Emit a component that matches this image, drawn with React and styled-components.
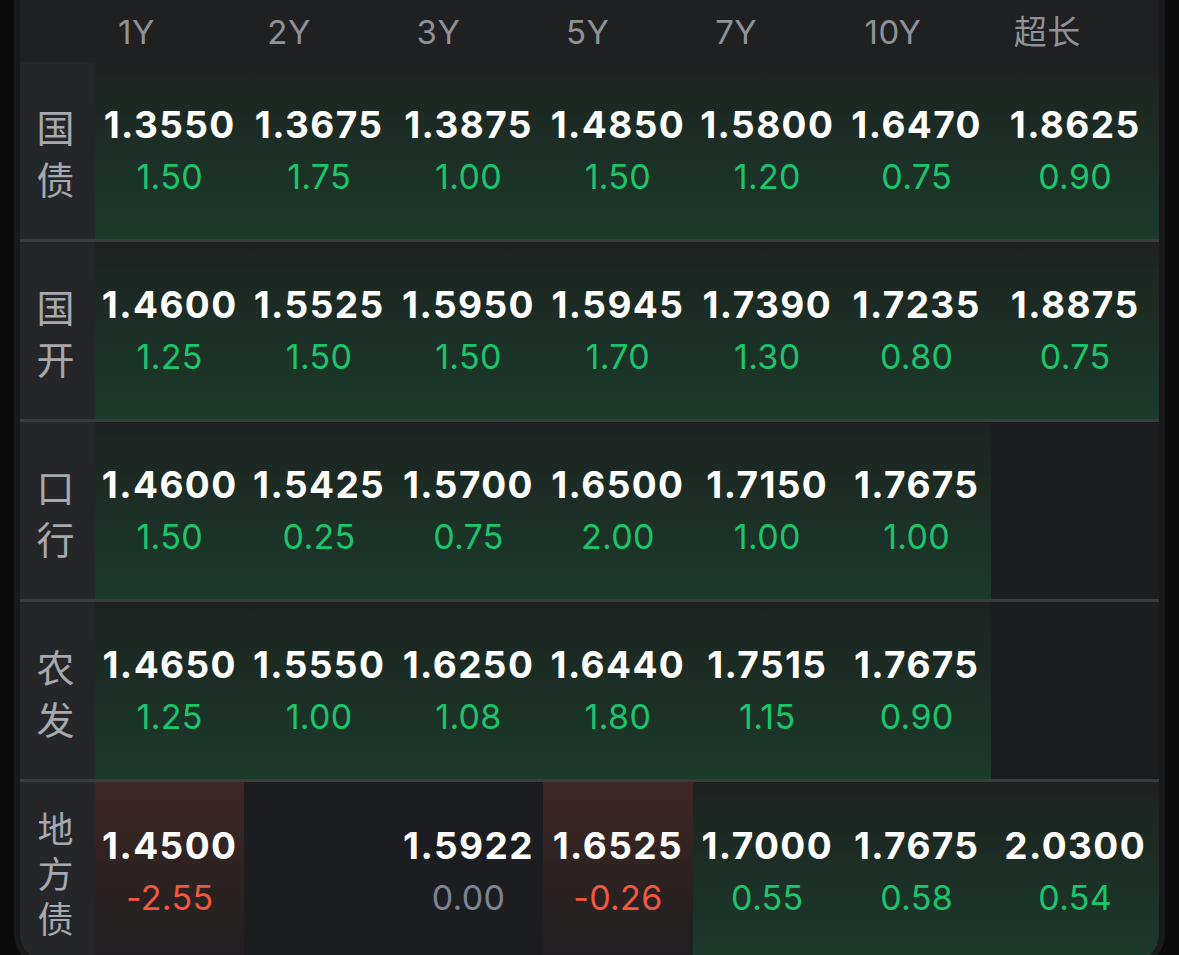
import React from 'react';
import styled, { createGlobalStyle, css } from 'styled-components';

const GlobalStyle = createGlobalStyle`
    html, body {
        margin: 0;
        padding: 0;
        background: #0b0b0c;
        height: 955px;
        overflow: hidden;
    }
    * {
        box-sizing: border-box;
    }
`

const Page = styled.div`
    width: 1179px;
    height: 955px;
    padding-left: 14px;
`

const Panel = styled.div`
    width: 1151px;
    border: 6px solid #19191b;
    border-top: none;
    border-radius: 0 0 34px 34px;
    background: #1c1d20;
    overflow: hidden;
`

const Header = styled.div`
    height: 62px;
    display: grid;
    grid-template-columns: repeat(7, 149.3px);
    align-items: center;
    padding-left: 98px;
    background: #1f2022;
`

const HeaderLabel = styled.span`
    font-family: Inter, "Noto Sans CJK SC", sans-serif;
    font-size: 33px;
    color: #8f9198;
    line-height: 1;
    padding-top: 2px;
    letter-spacing: 0.5px;
`

const Row = styled.div`
    display: grid;
    grid-template-columns: 75px repeat(6, 149.4px) 1fr;
    height: ${({ last }) => (last ? '180px' : '177px')};
    border-bottom: ${({ last }) => (last ? 'none' : '3px solid #3a3b3e')};
    box-sizing: content-box;
`

const RowLabel = styled.div`
    background: #25262a;
    display: flex;
    flex-direction: column;
    align-items: center;
    justify-content: center;
    padding-right: 4px;
    font-family: "Noto Sans CJK SC", sans-serif;
    font-size: ${({ tight }) => (tight ? '36px' : '38px')};
    color: #a7a9ae;
    line-height: ${({ tight }) => (tight ? '45px' : '52px')};
    padding-top: ${({ tight }) => (tight ? '0' : '2px')};
`

const toneBg = {
    up: css`background: linear-gradient(180deg, #1d2120 0%, #1c2d25 40%, #1b3a2a 100%);`,
    down: css`background: linear-gradient(180deg, #402624 0%, #2d2322 50%, #201f21 100%);`,
    flat: css`background: transparent;`,
}

const toneText = {
    up: '#1cc46c',
    down: '#f2573f',
    flat: '#7c8493',
}

const Cell = styled.div`
    display: flex;
    flex-direction: column;
    align-items: center;
    justify-content: center;
    gap: 8px;
    ${({ tone }) => (tone ? toneBg[tone] : '')}
`

const Price = styled.span`
    font-family: Inter, sans-serif;
    font-weight: 700;
    font-size: 37px;
    line-height: 44px;
    color: #ffffff;
    letter-spacing: 1.4px;
`

const Change = styled.span`
    font-family: Inter, sans-serif;
    font-weight: 400;
    font-size: 34px;
    line-height: 44px;
    letter-spacing: 0.3px;
    color: ${({ tone }) => toneText[tone]};
`

const tenors = ['1Y', '2Y', '3Y', '5Y', '7Y', '10Y', '超长'];

const rows = [
    {
        label: ['国', '债'],
        cells: [
            ['1.3550', '1.50', 'up'],
            ['1.3675', '1.75', 'up'],
            ['1.3875', '1.00', 'up'],
            ['1.4850', '1.50', 'up'],
            ['1.5800', '1.20', 'up'],
            ['1.6470', '0.75', 'up'],
            ['1.8625', '0.90', 'up'],
        ],
    },
    {
        label: ['国', '开'],
        cells: [
            ['1.4600', '1.25', 'up'],
            ['1.5525', '1.50', 'up'],
            ['1.5950', '1.50', 'up'],
            ['1.5945', '1.70', 'up'],
            ['1.7390', '1.30', 'up'],
            ['1.7235', '0.80', 'up'],
            ['1.8875', '0.75', 'up'],
        ],
    },
    {
        label: ['口', '行'],
        cells: [
            ['1.4600', '1.50', 'up'],
            ['1.5425', '0.25', 'up'],
            ['1.5700', '0.75', 'up'],
            ['1.6500', '2.00', 'up'],
            ['1.7150', '1.00', 'up'],
            ['1.7675', '1.00', 'up'],
            null,
        ],
    },
    {
        label: ['农', '发'],
        cells: [
            ['1.4650', '1.25', 'up'],
            ['1.5550', '1.00', 'up'],
            ['1.6250', '1.08', 'up'],
            ['1.6440', '1.80', 'up'],
            ['1.7515', '1.15', 'up'],
            ['1.7675', '0.90', 'up'],
            null,
        ],
    },
    {
        label: ['地', '方', '债'],
        cells: [
            ['1.4500', '-2.55', 'down'],
            null,
            ['1.5922', '0.00', 'flat'],
            ['1.6525', '-0.26', 'down'],
            ['1.7000', '0.55', 'up'],
            ['1.7675', '0.58', 'up'],
            ['2.0300', '0.54', 'up'],
        ],
    },
];

const App = () => {
    return (
        <Page>
            <GlobalStyle />
            <Panel>
                <Header>
                    {tenors.map(t => <HeaderLabel key={t}>{t}</HeaderLabel>)}
                </Header>
                {rows.map((row, i) => (
                    <Row key={row.label.join('')} last={i === rows.length - 1}>
                        <RowLabel tight={row.label.length > 2}>
                            {row.label.map((c, j) => <span key={j}>{c}</span>)}
                        </RowLabel>
                        {row.cells.map((cell, j) => (
                            cell ? (
                                <Cell key={j} tone={cell[2]}>
                                    <Price>{cell[0]}</Price>
                                    <Change tone={cell[2]}>{cell[1]}</Change>
                                </Cell>
                            ) : <Cell key={j} />
                        ))}
                    </Row>
                ))}
            </Panel>
        </Page>
    );
};

export default App;
